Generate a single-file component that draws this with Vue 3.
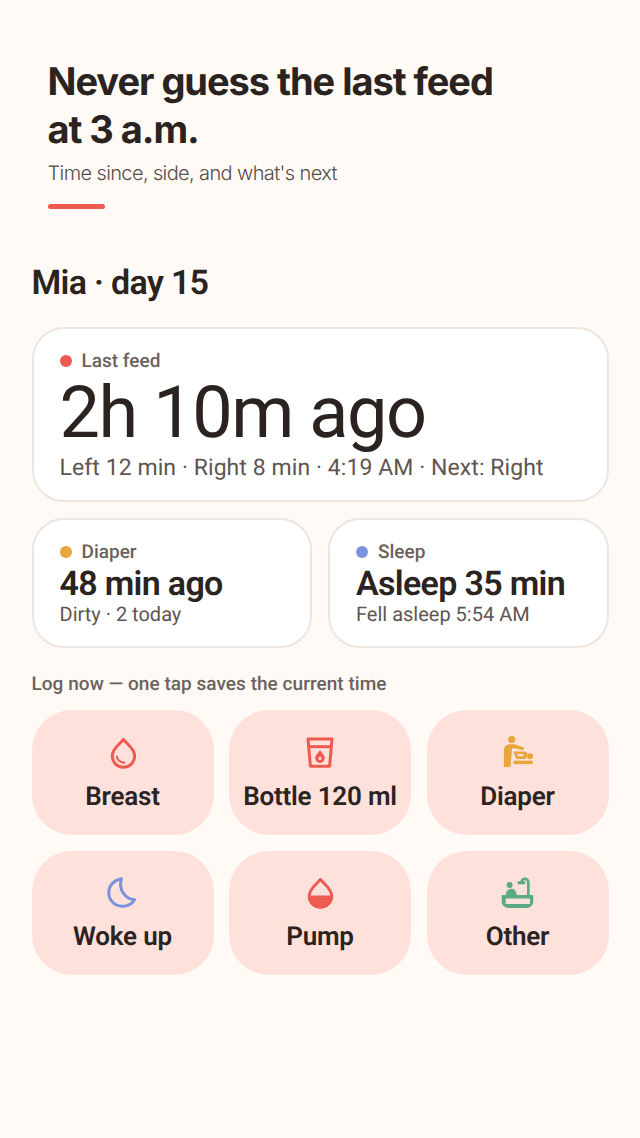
<script setup>
const actions = [
  { label: 'Breast', icon: 'breast' },
  { label: 'Bottle 120 ml', icon: 'bottle' },
  { label: 'Diaper', icon: 'diaper' },
  { label: 'Woke up', icon: 'moon' },
  { label: 'Pump', icon: 'pump' },
  { label: 'Other', icon: 'bath' },
]
</script>

<template>
  <main class="page">
    <header class="hero">
      <h1>Never guess the last feed<br />at 3 a.m.</h1>
      <p>Time since, side, and what's next</p>
      <div class="accent"></div>
    </header>

    <section class="content">
      <h2>Mia · day 15</h2>

      <article class="card main-card">
        <div class="label"><span class="dot red"></span>Last feed</div>
        <div class="big">2h 10m ago</div>
        <div class="detail">Left 12 min · Right 8 min · 4:19 AM · Next: Right</div>
      </article>

      <div class="pair">
        <article class="card small-card">
          <div class="label"><span class="dot amber"></span>Diaper</div>
          <div class="mid">48 min ago</div>
          <div class="sub">Dirty · 2 today</div>
        </article>
        <article class="card small-card">
          <div class="label"><span class="dot blue"></span>Sleep</div>
          <div class="mid">Asleep 35 min</div>
          <div class="sub">Fell asleep 5:54 AM</div>
        </article>
      </div>

      <p class="hint">Log now — one tap saves the current time</p>

      <div class="grid">
        <button v-for="a in actions" :key="a.label" class="action">
          <svg v-if="a.icon === 'breast'" class="icon" viewBox="0 0 24 24" fill="none" stroke="#ef5a50" stroke-width="2">
            <path d="M12.3 3C9.9 6 4.8 9.2 4.8 14a7.5 7.5 0 0 0 15 0c0-4.8-5.1-8-7.5-11Z" stroke-linejoin="round" />
            <path d="M7.9 14.4a4.8 4.8 0 0 0 5 4" stroke-linecap="round" stroke-width="1.4" />
          </svg>
          <svg v-else-if="a.icon === 'bottle'" class="icon" viewBox="0 0 24 24" fill="none" stroke="#ef5a50" stroke-width="2">
            <path d="M4 2.6h16l-1.6 18.2H5.6L4 2.6Z" stroke-linejoin="round" />
            <path d="M4.4 7.8h15.2" />
            <path d="M12 10.2c-1.2 1.7-3.2 3.2-3.2 5.2a3.2 3.2 0 0 0 6.4 0c0-2-2-3.5-3.2-5.2Zm0 4c-.5.6-1 1-1 1.5a1 1 0 0 0 2 0c0-.5-.5-.9-1-1.5Z" fill="#ef5a50" stroke="none" fill-rule="evenodd" />
          </svg>
          <svg v-else-if="a.icon === 'diaper'" class="icon" viewBox="0 0 24 24" fill="#e9a63b">
            <circle cx="7.8" cy="3" r="2.4" />
            <path d="M2.6 21.4V10.4c0-2.6 1.6-4.2 3.8-4.2h3.4l5.6 1.9c1 .4.8 1.9-.4 1.9L10.2 9H8L7 21.4H2.6Z" />
            <path d="M9 11h7.6l1.7 1.2-.7 2.6c-.2.8-.7 1.2-1.5 1.2h-4.3c-.7 0-1.1-.3-1.4-.9L9 11Zm2.5 1.6.6 1.6h3.4l.4-1.6h-4.4Z" fill-rule="evenodd" />
            <circle cx="20" cy="14.2" r="2" />
            <rect x="9" y="17.1" width="12.8" height="2.3" />
          </svg>
          <svg v-else-if="a.icon === 'moon'" class="icon" viewBox="0 0 24 24" fill="none" stroke="#7b93dc" stroke-width="2" stroke-linejoin="round">
            <path d="M11 2.5C6 3.2 2.5 7 2.5 11.8c0 5 4 9 9 9 3.6 0 6.6-1.6 8.3-4.3C14 16.5 8.6 10 11 2.5Z" />
          </svg>
          <svg v-else-if="a.icon === 'pump'" class="icon" viewBox="0 0 24 24" fill="none">
            <defs>
              <pattern id="pumpDots" width="2" height="2" patternUnits="userSpaceOnUse">
                <circle cx="1" cy="1" r="0.2" fill="#ffe1dc" opacity="0.7" />
              </pattern>
            </defs>
            <path d="M12.3 3C9.9 6 4.8 9.2 4.8 14a7.5 7.5 0 0 0 15 0c0-4.8-5.1-8-7.5-11Z" stroke="#ef5a50" stroke-width="2" stroke-linejoin="round" />
            <path d="M4.3 13.6h16v.6a8 8 0 0 1-16 0v-.6Z" fill="#ef5a50" />
            <path d="M5.5 15h13.6v.8a7 7 0 0 1-13.6 0V15Z" fill="url(#pumpDots)" />
          </svg>
          <svg v-else class="icon" viewBox="0 0 24 24" fill="none">
            <circle cx="6.4" cy="6.7" r="2" fill="#5aaa86" />
            <path d="M3.8 13.5c0-2.6 1.6-4.3 3.8-4.3 2 0 3.5 1.7 3.5 4.3H3.8Z" fill="#5aaa86" />
            <path d="M18.9 14V4.9a2.3 2.3 0 0 0-4.6 0" stroke="#5aaa86" stroke-width="1.8" />
            <path d="M12.6 5.2h3.4" stroke="#5aaa86" stroke-width="2" stroke-linecap="round" />
            <path d="M1.1 14a.7.7 0 0 1 .7-.7h19.7a.7.7 0 0 1 .7.7v3.6a4.4 4.4 0 0 1-4.4 4.4H5.5a4.4 4.4 0 0 1-4.4-4.4V14Zm2.7 1.6v3.7H20v-3.7H3.8Z" fill="#5aaa86" fill-rule="evenodd" />
          </svg>
          <span>{{ a.label }}</span>
        </button>
      </div>
    </section>
  </main>
</template>

<style>
html, body { margin: 0; background: #fffaf6; }
</style>

<style scoped>
.page {
  min-height: 1138px;
  background: #fffaf6;
  color: #2a2320;
  font-family: Roboto, sans-serif;
  text-rendering: geometricPrecision;
  box-sizing: border-box;
  padding-top: 59px;
}
.hero { padding: 0 47.5px; }
h1 {
  margin: 0;
  font-family: Inter, sans-serif;
  font-size: 38px;
  line-height: 47.5px;
  font-weight: 700;
  letter-spacing: -1.04px;
}
.hero p {
  margin: 5px 0 0;
  font-family: Inter, sans-serif;
  font-size: 20px;
  font-weight: 300;
  line-height: 28px;
  color: #564c48;
  letter-spacing: -0.62px;
}
.accent {
  width: 57px;
  height: 5px;
  border-radius: 3px;
  background: #ef5a50;
  margin-top: 17px;
}
.content { padding: 0 31.5px; }
h2 {
  margin: 52px 0 0;
  font-size: 34px;
  line-height: 44px;
  font-weight: 600;
  letter-spacing: -0.68px;
}
.card {
  background: #fff;
  border: 2px solid #ede5df;
  border-radius: 32px;
  box-sizing: border-box;
}
.main-card {
  margin-top: 22px;
  height: 175px;
  padding: 20px 26px 0;
}
.label {
  display: flex;
  align-items: center;
  gap: 10px;
  font-size: 19px;
  line-height: 24px;
  font-weight: 500;
  color: #6b625d;
}
.dot { width: 12px; height: 12px; border-radius: 50%; }
.red { background: #ef5a50; }
.amber { background: #e9a63b; }
.blue { background: #7b93dc; }
.big {
  font-size: 72px;
  line-height: 80px;
  font-weight: 400;
  letter-spacing: -1.44px;
}
.detail {
  font-size: 23px;
  line-height: 30px;
  color: #5f5551;
  letter-spacing: 0.07px;
}
.pair {
  display: grid;
  grid-template-columns: 1fr 1fr;
  gap: 16px;
  margin-top: 16px;
}
.small-card {
  height: 130px;
  padding: 20px 26px 0;
}
.mid {
  font-size: 34px;
  line-height: 40px;
  font-weight: 600;
  letter-spacing: -0.68px;
}
.sub {
  font-size: 20px;
  line-height: 26px;
  color: #5f5551;
  margin-top: -3px;
}
.hint {
  margin: 24px 0 0;
  font-size: 19px;
  line-height: 24px;
  font-weight: 500;
  color: #6b625d;
  letter-spacing: 0.04px;
}
.grid {
  display: grid;
  grid-template-columns: repeat(3, 1fr);
  gap: 16px 15.5px;
  margin-top: 14px;
}
.action {
  height: 124.5px;
  border: none;
  border-radius: 40px;
  background: #ffe1dc;
  color: #2a2320;
  font-family: Roboto, sans-serif;
  text-rendering: geometricPrecision;
  font-size: 26px;
  font-weight: 600;
  letter-spacing: -0.2px;
  display: flex;
  flex-direction: column;
  align-items: center;
  gap: 10px;
  padding: 24.5px 0 0;
}
.icon { width: 36px; height: 36px; display: block; overflow: visible; }
.action span { line-height: 32px; }
</style>
